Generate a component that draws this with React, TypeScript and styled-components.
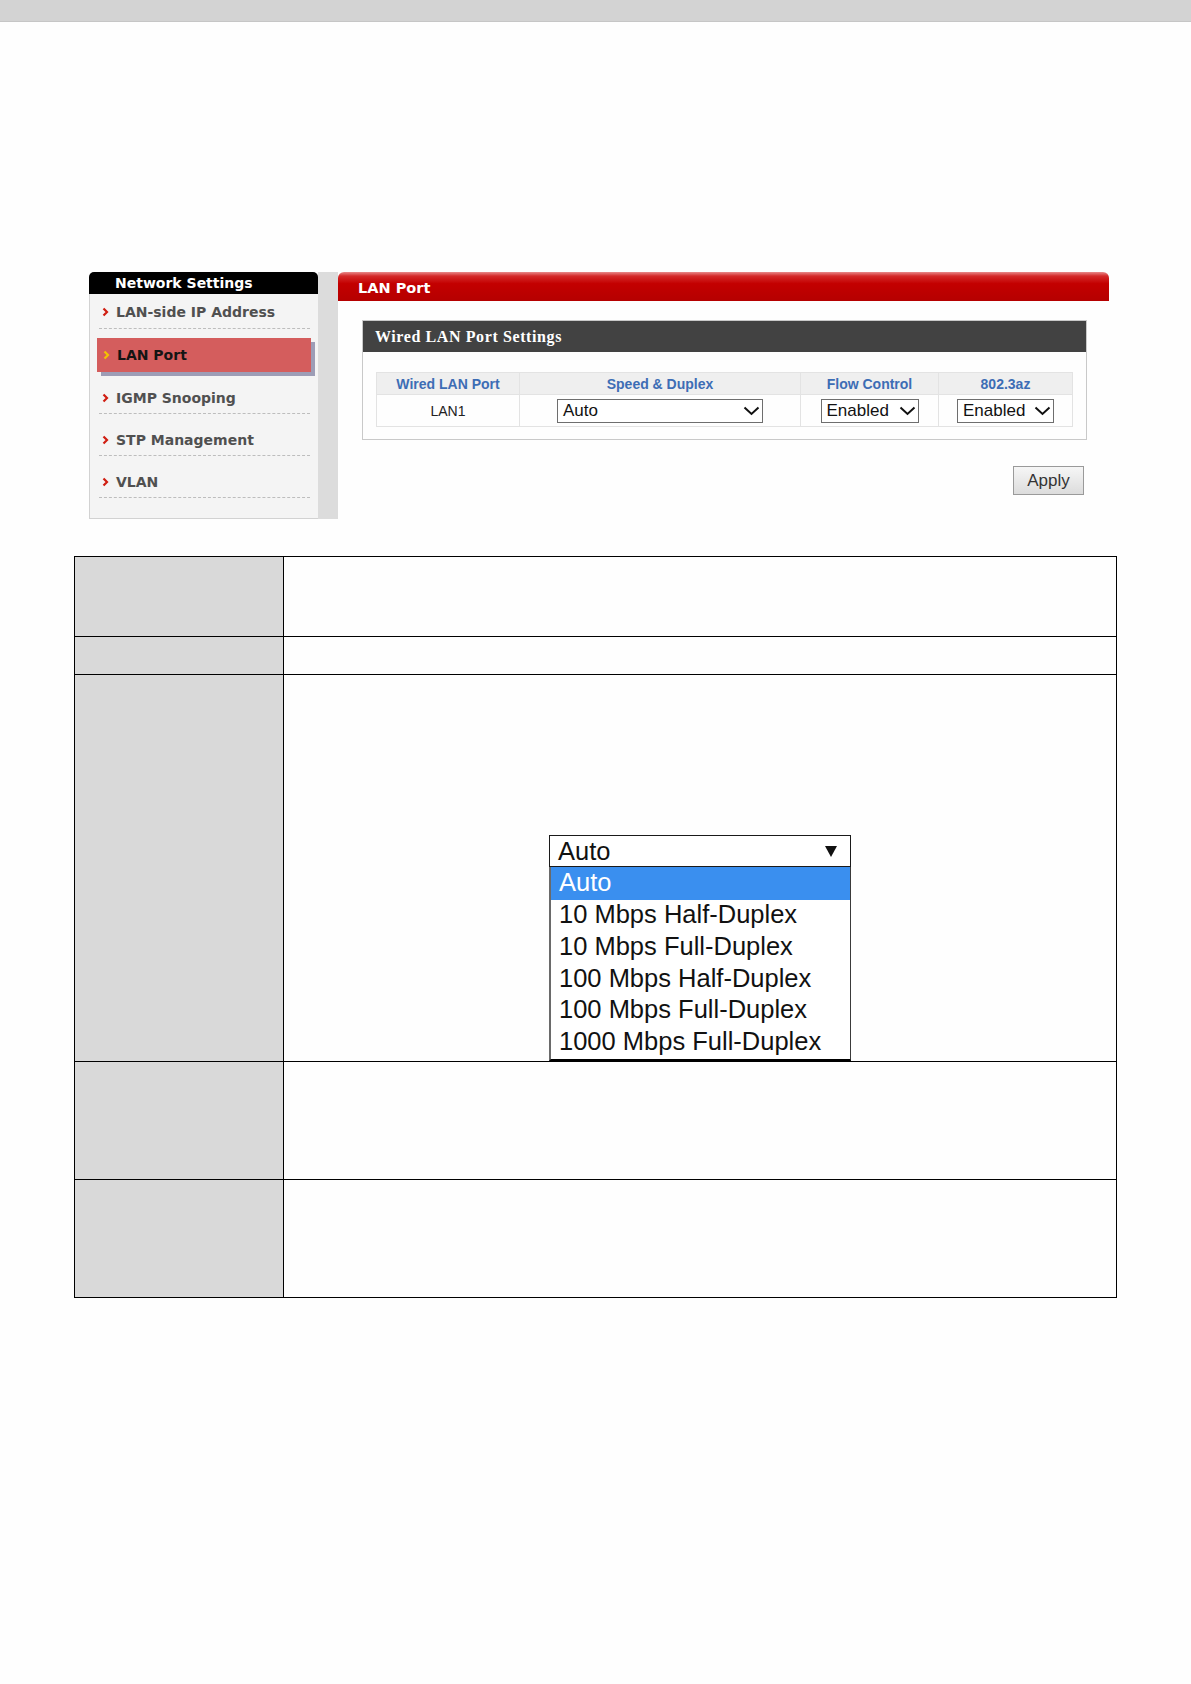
import React from "react";
import styled, { createGlobalStyle } from "styled-components";

const GlobalStyle = createGlobalStyle`
  html, body {
    margin: 0;
    padding: 0;
    background: #fefefe;
  }

  body {
    font-family: "Liberation Sans", Arial, sans-serif;
  }

  * {
    box-sizing: border-box;
  }
`;

const navItems = ["LAN-side IP Address", "LAN Port", "IGMP Snooping", "STP Management", "VLAN"];
const activeItem = "LAN Port";

const speedOptions = [
  "10 Mbps Half-Duplex",
  "10 Mbps Full-Duplex",
  "100 Mbps Half-Duplex",
  "100 Mbps Full-Duplex",
  "1000 Mbps Full-Duplex",
];

const docRows = [80, 38, 387, 118, 118];

const Chevron = ({ color }: { color: string }) => (
  <svg width="7" height="10" viewBox="0 0 7 10">
    <polyline points="1.5,1.5 5,5 1.5,8.5" fill="none" stroke={color} strokeWidth="2.2" />
  </svg>
);

const DownArrow = () => (
  <svg width="17" height="10" viewBox="0 0 17 10">
    <polyline points="1.5,1.5 8.5,8 15.5,1.5" fill="none" stroke="#111" strokeWidth="2" />
  </svg>
);

const FakeSelect = ({ value, width }: { value: string; width: number }) => (
  <SelectBox $width={width}>
    <span>{value}</span>
    <DownArrow />
  </SelectBox>
);

const App = () => {
  return (
    <Page>
      <GlobalStyle />
      <TopBar />

      <Shot>
        <Sidebar>
          <SideHeader>Network Settings</SideHeader>
          <SideBody>
            {navItems.map((item, i) =>
              item === activeItem ? (
                <ActiveWrap key={item}>
                  <ActiveBox>
                    <Chevron color="#f2c200" />
                    <NavText $active>{item}</NavText>
                  </ActiveBox>
                </ActiveWrap>
              ) : (
                <NavItem key={item} $first={i === 0}>
                  <Chevron color="#d01e12" />
                  <NavText>{item}</NavText>
                </NavItem>
              )
            )}
          </SideBody>
        </Sidebar>
        <Gutter />

        <Main>
          <TitleBar>LAN Port</TitleBar>
          <MainBody>
            <Panel>
              <PanelHeader>Wired LAN Port Settings</PanelHeader>
              <PanelBody>
                <PortTable>
                  <thead>
                    <tr>
                      <PortTh $width={143}>Wired LAN Port</PortTh>
                      <PortTh $width={281}>Speed &amp; Duplex</PortTh>
                      <PortTh $width={138}>Flow Control</PortTh>
                      <PortTh>802.3az</PortTh>
                    </tr>
                  </thead>
                  <tbody>
                    <tr>
                      <PortTd>LAN1</PortTd>
                      <PortTd>
                        <FakeSelect value="Auto" width={206} />
                      </PortTd>
                      <PortTd>
                        <FakeSelect value="Enabled" width={98} />
                      </PortTd>
                      <PortTd>
                        <FakeSelect value="Enabled" width={97} />
                      </PortTd>
                    </tr>
                  </tbody>
                </PortTable>
              </PanelBody>
            </Panel>
            <ApplyRow>
              <ApplyButton>Apply</ApplyButton>
            </ApplyRow>
          </MainBody>
        </Main>
      </Shot>

      <DocTable>
        <tbody>
          {docRows.map((h, i) => (
            <tr key={i}>
              <LabelCell $height={h} />
              {i === 2 ? (
                <DropCell $height={h}>
                  <Dropdown>
                    <DropTop>
                      <span>Auto</span>
                      <svg width="12" height="11" viewBox="0 0 12 11">
                        <polygon points="0,0 12,0 6,11" fill="#111" />
                      </svg>
                    </DropTop>
                    <DropList>
                      <DropOption $selected>Auto</DropOption>
                      {speedOptions.map((o) => (
                        <DropOption key={o}>{o}</DropOption>
                      ))}
                    </DropList>
                  </Dropdown>
                </DropCell>
              ) : (
                <ValueCell $height={h} />
              )}
            </tr>
          ))}
        </tbody>
      </DocTable>
    </Page>
  );
};

export default App;

const Page = styled.div`
  width: 1191px;
  min-height: 1684px;
  background: #fefefe;
`;

const TopBar = styled.div`
  height: 22px;
  background: #d3d3d3;
  border-bottom: 1px solid #c6c6c6;
`;

const Shot = styled.div`
  display: flex;
  width: 1020px;
  margin: 250px 0 0 89px;
`;

const Sidebar = styled.div`
  width: 229px;
  display: flex;
  flex-direction: column;
`;

const SideHeader = styled.div`
  height: 22px;
  padding: 1px 0 0 26px;

  background: #000;
  border-radius: 5px 5px 0 0;

  color: #fff;
  font-family: "DejaVu Sans", Verdana, sans-serif;
  font-size: 14px;
  font-weight: 700;
  line-height: 21px;
`;

const SideBody = styled.div`
  height: 225px;
  padding-top: 1px;
  background: #f4f4f4;
  border-left: 1px solid #d2d2d2;
  border-bottom: 1px solid #d2d2d2;
`;

const NavItem = styled.div<{ $first?: boolean }>`
  display: flex;
  align-items: center;
  gap: 7px;

  margin: 0 8px 0 9px;
  padding: ${({ $first }) => ($first ? "8px 0 7px 3px" : "17px 0 6px 3px")};

  border-bottom: 1px dashed #bdbdbd;
`;

const NavText = styled.span<{ $active?: boolean }>`
  color: ${({ $active }) => ($active ? "#141414" : "#505050")};
  font-family: "DejaVu Sans", Verdana, sans-serif;
  font-size: 14px;
  font-weight: 700;
  line-height: 18px;
`;

const ActiveWrap = styled.div`
  padding-top: 9px;
  margin: 0 7px 0 7px;
`;

const ActiveBox = styled.div`
  height: 34px;
  display: flex;
  align-items: center;
  gap: 7px;

  padding-left: 6px;

  background: #d45d5d;
  box-shadow: 4px 4px 0 #9d9db6;
`;

const Gutter = styled.div`
  width: 20px;
  background: #dcdcdc;
`;

const Main = styled.div`
  flex: 1;
  display: flex;
  flex-direction: column;
`;

const TitleBar = styled.div`
  height: 29px;
  padding: 4px 0 0 20px;

  background: linear-gradient(#e88a8a 0%, #d42a2a 14%, #c30000 40%, #b50000 100%);
  border-radius: 6px 6px 0 0;

  color: #fff;
  font-family: "DejaVu Sans", Verdana, sans-serif;
  font-size: 14.5px;
  font-weight: 700;
  line-height: 25px;
`;

const MainBody = styled.div`
  padding: 19px 22px 0 24px;
`;

const Panel = styled.div`
  border: 1px solid #c9c9c9;
`;

const PanelHeader = styled.div`
  height: 31px;
  padding-left: 12px;

  background: #424242;

  color: #fff;
  font-family: "Liberation Serif", "Times New Roman", serif;
  font-size: 16px;
  font-weight: 700;
  letter-spacing: 0.6px;
  line-height: 31px;
`;

const PanelBody = styled.div`
  padding: 20px 13px 12px 13px;
`;

const PortTable = styled.table`
  width: 100%;
  border-collapse: collapse;
  border: 1px solid #e3e3e3;
`;

const PortTh = styled.th<{ $width?: number }>`
  width: ${({ $width }) => ($width ? `${$width}px` : "auto")};
  height: 22px;
  padding: 0;

  background: #efefef;
  border: 1px solid #e3e3e3;

  color: #3d6db5;
  font-size: 14px;
  font-weight: 700;
  text-align: center;
`;

const PortTd = styled.td`
  height: 32px;
  padding: 0;

  border: 1px solid #e3e3e3;

  color: #222;
  font-size: 14px;
  text-align: center;
`;

const SelectBox = styled.div<{ $width: number }>`
  width: ${({ $width }) => $width}px;
  height: 24px;
  display: inline-flex;
  align-items: center;
  justify-content: space-between;
  vertical-align: middle;

  padding: 0 2px 0 5px;

  background: #fff;
  border: 1px solid #6e6e6e;

  color: #111;
  font-size: 17px;
  text-align: left;
`;

const ApplyRow = styled.div`
  display: flex;
  justify-content: flex-end;

  margin-top: 26px;
  padding-right: 3px;
`;

const ApplyButton = styled.button`
  width: 71px;
  height: 29px;
  padding: 0;

  background: linear-gradient(#f6f6f6, #dcdcdc);
  border: 1px solid #9a9a9a;

  color: #333;
  font-family: "Liberation Sans", Arial, sans-serif;
  font-size: 17px;
`;

const DocTable = styled.table`
  width: 1043px;
  margin: 37px 0 0 74px;
  border-collapse: collapse;
  table-layout: fixed;
`;

const LabelCell = styled.td<{ $height: number }>`
  width: 209px;
  height: ${({ $height }) => $height}px;
  padding: 0;

  background: #d9d9d9;
  border: 1px solid #000;
`;

const ValueCell = styled.td<{ $height: number }>`
  height: ${({ $height }) => $height}px;
  padding: 0;
  border: 1px solid #000;
`;

const DropCell = styled(ValueCell)`
  vertical-align: bottom;
`;

const Dropdown = styled.div`
  width: 302px;
  margin: 0 auto;
  font-family: "Liberation Sans", Arial, sans-serif;
  font-size: 25.5px;
`;

const DropTop = styled.div`
  height: 32px;
  display: flex;
  align-items: center;
  justify-content: space-between;

  padding: 0 13px 0 8px;

  background: #fff;
  border: 1px solid #1a1a1a;

  color: #111;
`;

const DropList = styled.div`
  background: #fff;
  border: 1px solid #3a3a3a;
  border-top: none;
  border-left: 2px solid #6a6a6a;
  border-bottom: 2px solid #000;
`;

const DropOption = styled.div<{ $selected?: boolean }>`
  height: ${({ $selected }) => ($selected ? "33px" : "31.8px")};
  padding: 0 0 2px 8px;

  background: ${({ $selected }) => ($selected ? "#3a8fef" : "#fff")};

  color: ${({ $selected }) => ($selected ? "#fff" : "#111")};
  line-height: ${({ $selected }) => ($selected ? "31px" : "29.8px")};
`;
